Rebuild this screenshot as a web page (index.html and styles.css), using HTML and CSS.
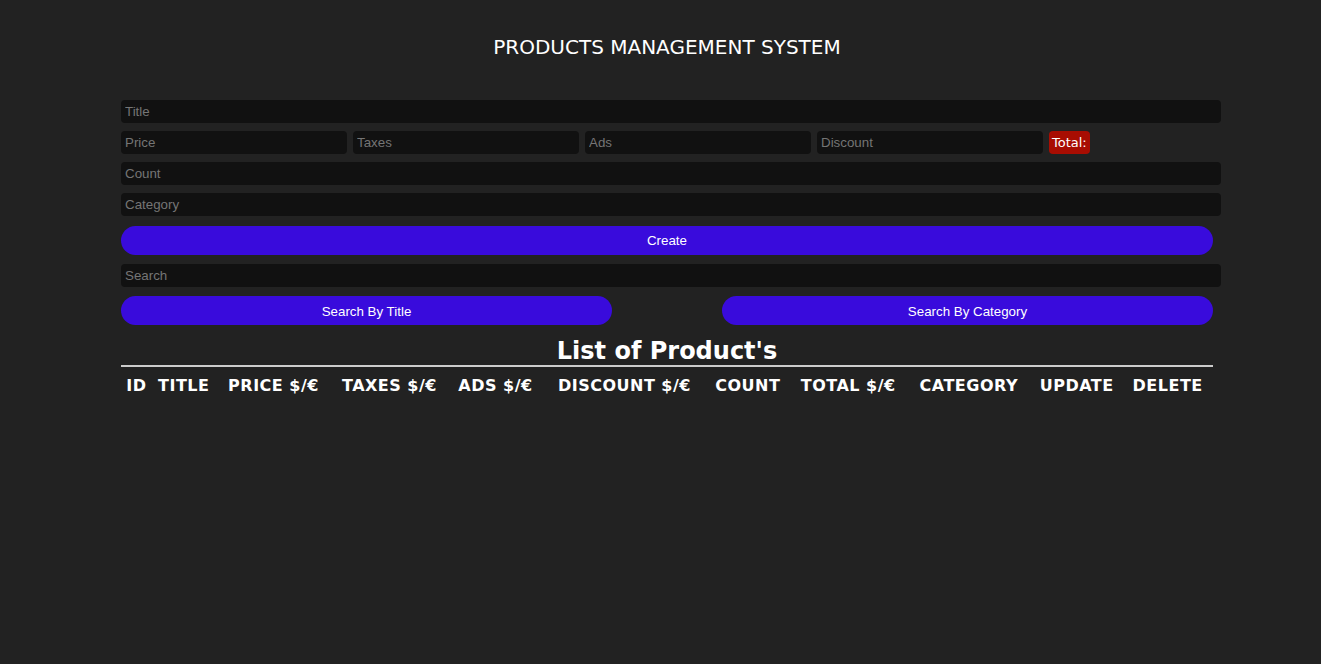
FILE: index.html
```html
<!DOCTYPE html>
<html>
<head>
<meta charset="utf-8">
<link rel="stylesheet" href="styles.css">
</head>
<body>
<div class="crud">
  <div class="head"><h2>Products Management System</h2></div>
  <div class="inputs">
    <input class="field" type="text" placeholder="Title">
    <div class="price">
      <input class="field small" type="text" placeholder="Price">
      <input class="field small" type="text" placeholder="Taxes">
      <input class="field small" type="text" placeholder="Ads">
      <input class="field small" type="text" placeholder="Discount">
      <small class="total">Total:</small>
    </div>
    <input class="field" type="text" placeholder="Count">
    <input class="field" type="text" placeholder="Category">
    <button class="btn create">Create</button>
  </div>
  <div class="outputs">
    <input class="field" type="text" placeholder="Search">
    <div class="btnSearch">
      <button class="btn">Search By Title</button>
      <button class="btn">Search By Category</button>
    </div>
    <h2 class="list">List of Product's</h2>
    <hr class="line">
    <table>
      <tr>
        <th>ID</th><th>TITLE</th><th>PRICE $/€</th><th>TAXES $/€</th><th>ADS $/€</th><th>DISCOUNT $/€</th><th>COUNT</th><th>TOTAL $/€</th><th>CATEGORY</th><th>UPDATE</th><th>DELETE</th>
      </tr>
    </table>
  </div>
</div>
</body>
</html>
```
FILE: styles.css
```css
html, body {
  margin: 0;
  padding: 0;
  background: #222222;
  color: #ffffff;
  font-family: "DejaVu Sans", Verdana, sans-serif;
}
.crud {
  width: 1092px;
  margin-left: 121px;
}
.head h2 {
  margin: 0;
  padding-top: 35px;
  height: 65px;
  line-height: 24px;
  font-size: 20px;
  font-weight: normal;
  text-align: center;
  text-transform: uppercase;
}
.field {
  display: block;
  box-sizing: border-box;
  width: 1100px;
  height: 23px;
  padding: 0 4px;
  margin: 0 0 8px 0;
  border: none;
  outline: none;
  border-radius: 4px;
  background: #111111;
  color: #ffffff;
  font-family: "Liberation Sans", Arial, sans-serif;
  font-size: 13.33px;
}
.field::placeholder {
  color: #757575;
}
.price {
  display: flex;
  align-items: center;
  gap: 6px;
  margin-bottom: 8px;
}
.price .field.small {
  width: 226px;
  margin: 0;
  flex: none;
}
.total {
  display: block;
  height: 23px;
  line-height: 23px;
  padding: 0 3px;
  background: #a80d02;
  border-radius: 4px;
  font-size: 13px;
  font-family: "DejaVu Sans", Verdana, sans-serif;
}
.btn {
  display: block;
  width: 100%;
  height: 29px;
  border: none;
  border-radius: 20px;
  background: #390bdc;
  color: #ffffff;
  font-family: "Liberation Sans", Arial, sans-serif;
  font-size: 13.33px;
  padding: 0;
  cursor: pointer;
}
.btnSearch .btn {
  padding-top: 1px;
}
.create {
  margin: 10px 0 9px 0;
}
.outputs .field {
  margin-bottom: 9px;
}
.btnSearch {
  display: flex;
  justify-content: space-between;
}
.btnSearch .btn {
  width: 491px;
}
.list {
  margin: 14px 0 0 0;
  font-size: 24px;
  line-height: 25px;
  text-align: center;
}
.line {
  margin: 1px 0 0 0;
  border: none;
  border-top: 2px solid #cccccc;
  height: 0;
}
table {
  width: 100%;
  border-collapse: separate;
  border-spacing: 2px;
  margin-top: 6px;
}
th {
  font-family: "DejaVu Sans", Verdana, sans-serif;
  font-size: 16px;
  letter-spacing: 0.5px;
  font-weight: bold;
  padding: 1px;
  text-align: center;
}
```
